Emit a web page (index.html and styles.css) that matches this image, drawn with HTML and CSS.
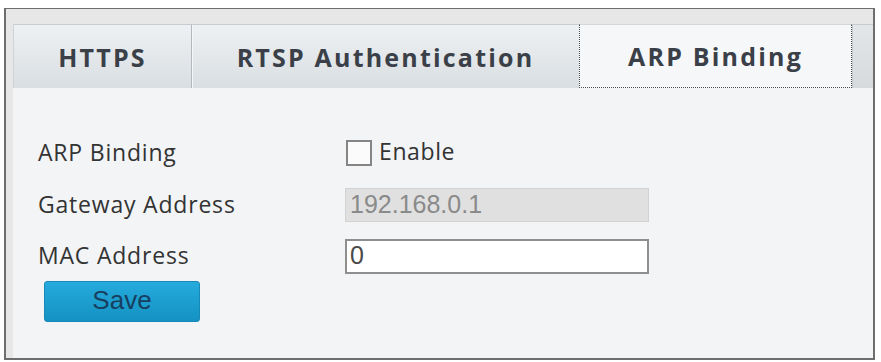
FILE: index.html
```html
<!DOCTYPE html>
<html>
<head>
<meta charset="utf-8">
<link rel="stylesheet" href="styles.css">
</head>
<body>
<div class="frame">
  <div class="tabs">
    <div class="tab tab-https">HTTPS</div>
    <div class="tab tab-rtsp">RTSP Authentication</div>
    <div class="tab tab-active">ARP Binding</div>
    <div class="tab-filler"></div>
  </div>
  <div class="content">
    <div class="form">
      <div class="label">ARP Binding</div>
      <div class="control">
        <label class="check"><span class="box"></span><span class="check-text">Enable</span></label>
      </div>
      <div class="label">Gateway Address</div>
      <div class="control"><div class="input input-disabled">192.168.0.1</div></div>
      <div class="label">MAC Address</div>
      <div class="control"><div class="input">0</div></div>
    </div>
    <button class="save">Save</button>
  </div>
</div>
</body>
</html>
```

FILE: styles.css
```css
html, body {
  margin: 0;
  padding: 0;
  background: #ffffff;
}

.frame {
  box-sizing: border-box;
  margin: 8px 0 0 4px;
  width: 871px;
  height: 352px;
  border: 2px solid #6e6e6e;
  border-top-width: 1px;
  background: #e7e7e7;
  padding: 15px 0 0 7px;
  display: flex;
  flex-direction: column;
}

.tabs {
  display: flex;
  height: 64px;
  flex: none;
}

.tab {
  box-sizing: border-box;
  height: 64px;
  display: flex;
  align-items: center;
  justify-content: center;
  font-family: "Open Sans", sans-serif;
  font-weight: 700;
  font-size: 25px;
  letter-spacing: 2.2px;
  color: #3a3f48;
  background: linear-gradient(#eef1f3, #d9dee2);
  border-top: 1px solid #c8ccd0;
}

.tab-https {
  width: 178px;
  border-left: 1px solid #cfd3d6;
}

.tab-rtsp {
  width: 388px;
  border-left: 1px solid #b4b8bc;
  box-shadow: inset 1px 0 0 #f4f6f7;
}

.tab-active {
  width: 273px;
  background: #f5f7f9;
  border: 1px dotted #4e4e4e;
  border-top: 1px solid #d4d7da;
  padding-bottom: 1px;
}

.tab-filler {
  flex: 1;
  background: linear-gradient(#e3e6e8, #d6dadd);
  border-top: 1px solid #c8ccd0;
  border-left: 1px solid #c4c8cb;
}

.content {
  flex: 1;
  background: #f2f4f6;
  padding: 39px 0 0 25px;
}

.form {
  display: grid;
  grid-template-columns: 307px 304px;
  grid-template-rows: 52px 52px 50px;
  align-items: center;
}

.label {
  font-family: "Open Sans", sans-serif;
  font-size: 23px;
  letter-spacing: 0.8px;
  color: #333333;
  line-height: 1;
  padding-bottom: 2px;
}

.control {
  display: flex;
  align-items: center;
}

.check {
  display: flex;
  align-items: center;
  gap: 7px;
  margin-left: 1px;
}

.box {
  box-sizing: border-box;
  width: 26px;
  height: 26px;
  border: 2px solid #858585;
  background: #fbfbfb;
}

.check-text {
  font-family: "Open Sans", sans-serif;
  font-size: 23px;
  letter-spacing: 0.6px;
  color: #333333;
  line-height: 1;
  padding-bottom: 3px;
}

.input {
  box-sizing: border-box;
  width: 304px;
  height: 35px;
  border: 2px solid #8e8e8e;
  background: #ffffff;
  font-family: "Liberation Sans", Arial, sans-serif;
  font-size: 25px;
  color: #4a4a4a;
  padding: 0 0 0 3px;
  line-height: 29px;
}

.input-disabled {
  height: 34px;
  border: 1px solid #d2d2d2;
  background: #e0e0e0;
  color: #8a8a8a;
  padding: 1px 0 0 4px;
}

.save {
  display: block;
  box-sizing: border-box;
  margin: 0 0 0 6px;
  width: 156px;
  height: 41px;
  border: 1px solid #1789b8;
  border-radius: 3px;
  background: linear-gradient(#25abdc, #1492c3);
  font-family: "Liberation Sans", Arial, sans-serif;
  font-size: 26px;
  color: #173f5f;
  padding: 0 0 2px;
}
```
